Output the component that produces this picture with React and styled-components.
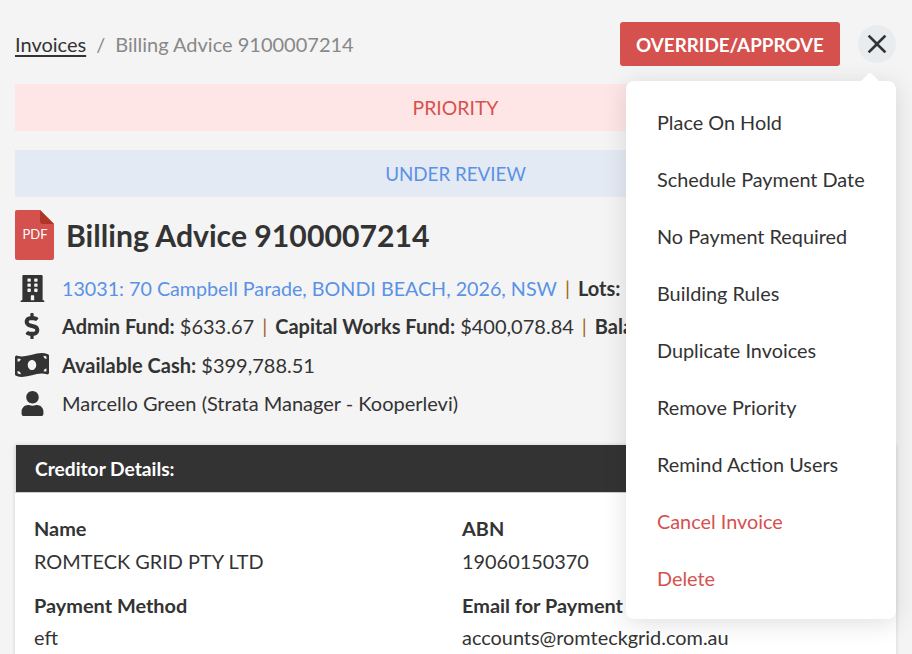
import React from "react";
import styled, { createGlobalStyle } from "styled-components";
import { FaBuilding, FaDollarSign, FaMoneyBillWave, FaUser } from "react-icons/fa";
import { MdClose } from "react-icons/md";

const Global = createGlobalStyle`
  html, body { margin: 0; padding: 0; height: 654px; overflow: hidden; background: #f4f4f4; }
  body { font-family: Lato, "Liberation Sans", sans-serif; color: #333; font-size: 20px; }
  * { box-sizing: border-box; }
`;
const Page = styled.div`
  position: relative; width: 912px; height: 654px; overflow: hidden;
  padding: 22px 16px 0 15px;
`;
const Header = styled.header`
  display: flex; align-items: center; justify-content: space-between; height: 44px;
`;
const Breadcrumb = styled.nav`
  display: flex; align-items: center; font-size: 20px; color: #888;
`;
const CrumbLink = styled.a`
  color: #333; text-decoration: underline; text-underline-offset: 3px;
`;
const Slash = styled.span`margin: 0 10px; color: #888;`;
const Actions = styled.div`display: flex; align-items: center; gap: 18px;`;
const PrimaryButton = styled.button`
  height: 44px; width: 220px; border: 0; border-radius: 3px; background: #d5514e; color: #fff;
  font: 700 18.8px Lato, sans-serif; padding: 0;
`;
const CloseButton = styled.button`
  width: 38px; height: 38px; border: 0; border-radius: 50%; background: #e9ecef; color: #333;
  display: flex; align-items: center; justify-content: center; padding: 0;
`;
const Banner = styled.div`
  height: 47px; display: flex; align-items: center; justify-content: center;
  font-size: ${p => p.$size}px;
  margin-top: ${p => p.$top}px;
  background: ${p => p.$bg}; color: ${p => p.$fg};
`;
const TitleRow = styled.div`display: flex; align-items: center; gap: 11px; margin-top: 13px; height: 50px;`;
const Title = styled.h1`margin: 0; font-size: 30.2px; font-weight: 700; color: #333; line-height: 50px;`;
const Info = styled.div`display: flex; flex-direction: column; margin-top: 9px;`;
const InfoRow = styled.div`
  display: flex; align-items: center; height: ${p => p.$h}px; white-space: nowrap;
`;
const IconCell = styled.span`
  width: 34px; margin-right: 13px; display: flex; justify-content: center; color: #333; flex: none;
`;
const AddressLink = styled.a`color: #5a92e6; font-size: 19.7px;`;
const Sep = styled.span`margin: 0 8px; color: #a5641e;`;
const Card = styled.section`
  margin-top: 23px; background: #fff; box-shadow: 0 0 4px rgba(0,0,0,.15); height: 300px;
`;
const CardHead = styled.div`
  height: 48px; background: #333; color: #fff; font-weight: 700; font-size: 19.2px;
  display: flex; align-items: center; padding-left: 19px;
  border-left: 1px solid #ddd; border-right: 1px solid #ddd; border-bottom: 1px solid #ccc;
`;
const CardGrid = styled.div`
  display: grid; grid-template-columns: 428px 1fr; padding: 23px 19px 0; row-gap: 20px; font-size: 19.9px;
`;
const Field = styled.div`display: flex; flex-direction: column; gap: 8.5px; line-height: 24px;`;
const Label = styled.div`font-weight: 700;`;
const Value = styled.div``;
const Menu = styled.ul`
  position: absolute; left: 626px; top: 81px; width: 270px; height: 538px; margin: 0; list-style: none;
  padding: 12px 0 0 31px; background: #fff; border-radius: 8px; font-size: 19.85px;
  box-shadow: 0 4px 24px rgba(0,0,0,.13);
  &::before {
    content: ""; position: absolute; top: -6px; right: 19px; width: 14px; height: 14px;
    background: #fff; transform: rotate(45deg); border-radius: 2px;
  }
`;
const MenuItem = styled.li`
  height: 57px; display: flex; align-items: center; color: ${p => p.$danger ? "#d5514e" : "#333"};
`;

const PdfIcon = () => (
  <svg width="40" height="50" viewBox="0 0 40 50" style={{ flex: "none" }}>
    <path d="M2 0H25L39 14V48a2 2 0 0 1-2 2H2a2 2 0 0 1-2-2V2a2 2 0 0 1 2-2z" fill="#d5514e" />
    <path d="M25 0L39 14H28a3 3 0 0 1-3-3z" fill="#b03428" />
    <text x="20" y="29" textAnchor="middle" fontFamily="Lato, sans-serif" fontSize="13" fill="#fff">PDF</text>
  </svg>
);

const items = ["Place On Hold", "Schedule Payment Date", "No Payment Required", "Building Rules", "Duplicate Invoices", "Remove Priority", "Remind Action Users"];

export default function App() {
  return (
    <Page>
      <Global />
      <Header>
        <Breadcrumb>
          <CrumbLink>Invoices</CrumbLink><Slash>/</Slash><span>Billing Advice 9100007214</span>
        </Breadcrumb>
        <Actions>
          <PrimaryButton>OVERRIDE/APPROVE</PrimaryButton>
          <CloseButton><MdClose size={32} /></CloseButton>
        </Actions>
      </Header>
      <Banner $top={18} $size={19.4} $bg="#ffe6e6" $fg="#d5514e">PRIORITY</Banner>
      <Banner $top={19} $size={18.8} $bg="#e4eaf3" $fg="#5a92e6">UNDER REVIEW</Banner>
      <TitleRow><PdfIcon /><Title>Billing Advice 9100007214</Title></TitleRow>
      <Info>
        <InfoRow $h={38}>
          <IconCell><FaBuilding size={27} /></IconCell>
          <AddressLink>13031: 70 Campbell Parade, BONDI BEACH, 2026, NSW</AddressLink><Sep>|</Sep><b>Lots:</b>&nbsp;120
        </InfoRow>
        <InfoRow $h={38}>
          <IconCell><FaDollarSign size={26} /></IconCell>
          <b>Admin Fund:</b>&nbsp;$633.67<Sep>|</Sep><b>Capital Works Fund:</b>&nbsp;$400,078.84<Sep>|</Sep><b>Balance:</b>&nbsp;$400,712.51
        </InfoRow>
        <InfoRow $h={39}>
          <IconCell><FaMoneyBillWave size={34} /></IconCell>
          <b>Available Cash:</b>&nbsp;$399,788.51
        </InfoRow>
        <InfoRow $h={38}>
          <IconCell><FaUser size={25} /></IconCell>
          Marcello Green (Strata Manager - Kooperlevi)
        </InfoRow>
      </Info>
      <Card>
        <CardHead>Creditor Details:</CardHead>
        <CardGrid>
          <Field><Label>Name</Label><Value>ROMTECK GRID PTY LTD</Value></Field>
          <Field><Label>ABN</Label><Value>19060150370</Value></Field>
          <Field><Label>Payment Method</Label><Value>eft</Value></Field>
          <Field><Label>Email for Payment Advice</Label><Value>accounts@romteckgrid.com.au</Value></Field>
        </CardGrid>
      </Card>
      <Menu>
        {items.map(i => <MenuItem key={i}>{i}</MenuItem>)}
        <MenuItem $danger>Cancel Invoice</MenuItem>
        <MenuItem $danger>Delete</MenuItem>
      </Menu>
    </Page>
  );
}
